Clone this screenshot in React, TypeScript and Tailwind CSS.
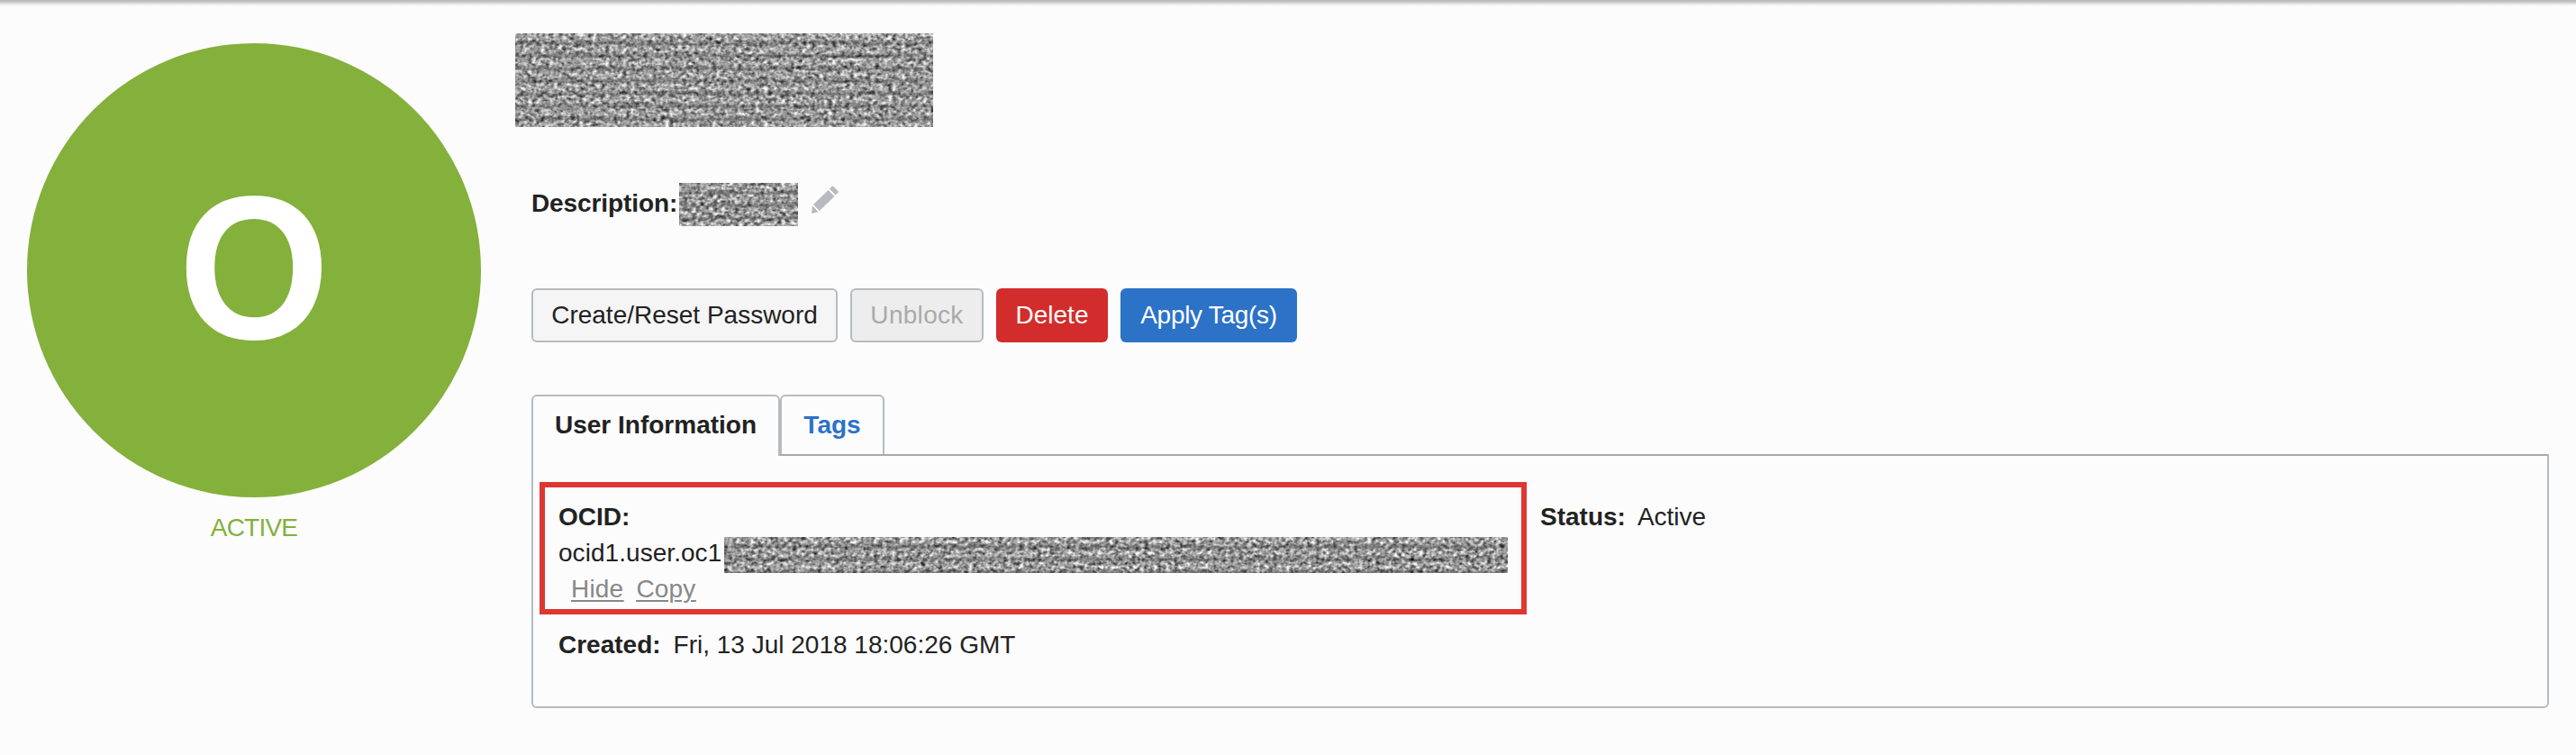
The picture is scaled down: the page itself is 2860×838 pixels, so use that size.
import React from "react";

function Redacted({ className, id, seed }: { className: string; id: string; seed: number }) {
  return (
    <svg className={className} aria-hidden="true">
      <defs>
        <filter id={id} x="0" y="0" width="100%" height="100%" colorInterpolationFilters="sRGB">
          <feTurbulence type="fractalNoise" baseFrequency="0.21 0.25" numOctaves={2} seed={seed} />
          <feColorMatrix values="0.85 0.85 0 0 -0.21  0.85 0.85 0 0 -0.21  0.85 0.85 0 0 -0.21  0 0 0 0 1" />
        </filter>
        <linearGradient id={id + "-rows"} x1="0" y1="0" x2="0" y2="14" gradientUnits="userSpaceOnUse" spreadMethod="repeat">
          <stop offset="0" stopColor="#000" stopOpacity="0.05" />
          <stop offset="0.45" stopColor="#000" stopOpacity="0" />
          <stop offset="0.8" stopColor="#000" stopOpacity="0.3" />
          <stop offset="1" stopColor="#000" stopOpacity="0.05" />
        </linearGradient>
      </defs>
      <rect width="100%" height="100%" filter={"url(#" + id + ")"} />
      <rect width="100%" height="100%" fill={"url(#" + id + "-rows)"} />
    </svg>
  );
}

function Pencil() {
  return (
    <svg className="mt-[206px] ml-[15px] h-[31px] w-[30px] shrink-0" viewBox="0 0 30 31" fill="#b5bbc1" aria-label="Edit">
      <path d="M22.5 0.9 Q23.4 0 24.3 0.9 L29.3 6.1 Q30.2 7 29.3 7.9 L26.6 10.6 L19.9 3.6 Z" />
      <path d="M18.6 4.9 L25.4 12 L8.8 28 L2 20.9 Z" />
      <path d="M1 22.3 L7.5 29.2 L0 31 Z" />
    </svg>
  );
}

export default function App() {
  return (
    <div className="flex h-[838px] w-[2860px] overflow-hidden bg-[#fcfcfc] bg-[linear-gradient(to_bottom,#b8b8b8_0px,#c4c4c4_2px,#e4e4e4_4px,#f7f7f7_6px,#fcfcfc_8px)] font-['Liberation_Sans',Arial,sans-serif] text-[28px] leading-[40px] text-[#222]">
      <aside className="ml-[30px] flex w-[504px] shrink-0 flex-col items-center pt-12">
        <div className="flex size-[504px] items-center justify-center rounded-full bg-[#84b03c] text-[216px] leading-none font-bold text-white">
          <span className="-translate-y-[3px] scale-y-[1.05]">O</span>
        </div>
        <div className="mt-[14px] tracking-[-0.8px] text-[#84b03c]">ACTIVE</div>
      </aside>

      <main className="ml-[38px] flex w-[2258px] flex-col">
        <Redacted id="name" seed={4} className="mt-[37px] h-[104px] w-[464px] shrink-0" />

        <div className="-mt-[141px] flex h-[320px] shrink-0 items-start pl-[18px]">
          <span className="mt-[206px] w-[164px] font-bold tracking-[-0.1px] whitespace-nowrap">Description:</span>
          <Redacted id="description" seed={9} className="mt-[203px] h-12 w-[132px] shrink-0" />
          <Pencil />
        </div>

        <div className="ml-[18px] flex h-[60px] shrink-0 gap-[14px] whitespace-nowrap">
          <button className="w-[340px] rounded-md border-2 border-[#b5bbc1] bg-[#f5f5f5]">Create/Reset Password</button>
          <button className="w-[148px] rounded-md border-2 border-[#b5bbc1] bg-[#ededed] tracking-[0.3px] text-[#aaa]" disabled>Unblock</button>
          <button className="w-[124px] rounded-md bg-[#d22c2c] text-white">Delete</button>
          <button className="w-[196px] rounded-md bg-[#2c72c7] tracking-[-0.3px] text-white">Apply Tag(s)</button>
        </div>

        <div className="z-10 mt-[58px] ml-[18px] flex h-[68px] shrink-0 font-bold">
          <div className="w-[276px] rounded-t-md border-2 border-b-0 border-[#b5bbc1] bg-[#fcfcfc] pt-[12px] text-center">User Information</div>
          <div className="h-[66px] w-[116px] rounded-t-md border-2 border-b-0 border-[#b5bbc1] pt-[12px] text-center text-[#2c72c7]">Tags</div>
        </div>

        <section className="-mt-[2px] ml-[18px] flex h-[282px] w-[2240px] shrink-0 items-start rounded-b-md border-2 border-[#b5bbc1] border-t-[#a9a9a9]">
          <div className="mt-[29px] ml-[7px] w-[1096px]">
            <div className="h-[147px] border-[6px] border-[#dd3731] pt-[13px] pl-[15px]">
              <div className="font-bold">OCID:</div>
              <div className="flex h-10">
                <span className="w-[184px] tracking-[0.05px]">ocid1.user.oc1</span>
                <Redacted id="ocid" seed={14} className="mt-[2px] h-10 w-[870px] shrink-0" />
              </div>
              <div className="flex gap-[14px] pl-[14px] tracking-[0.2px] text-[#888] underline decoration-2 underline-offset-[3px]">
                <a>Hide</a>
                <a>Copy</a>
              </div>
            </div>
            <div className="mt-[14px] flex gap-[14px] pl-[21px]">
              <b>Created:</b>
              <span>Fri, 13 Jul 2018 18:06:26 GMT</span>
            </div>
          </div>
          <div className="mt-[48px] ml-[15px] flex gap-[13px]">
            <b>Status:</b>
            <span>Active</span>
          </div>
        </section>
      </main>
    </div>
  );
}
